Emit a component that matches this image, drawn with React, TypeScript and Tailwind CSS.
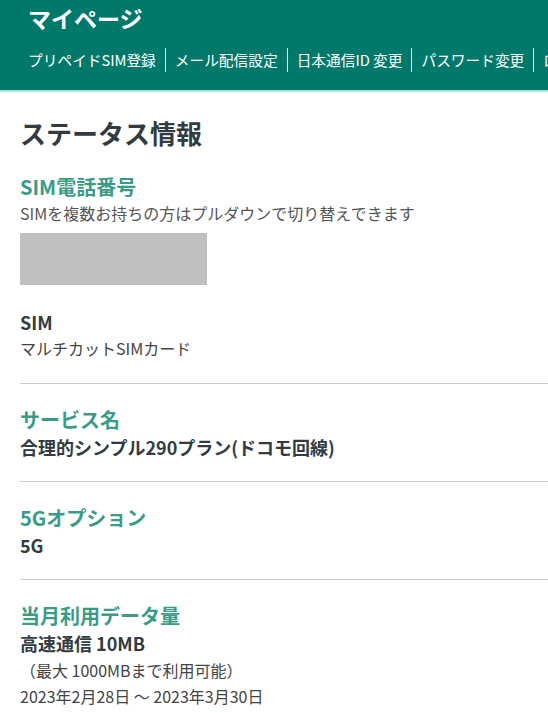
const navItems = ['プリペイドSIM登録', 'メール配信設定', '日本通信ID 変更', 'パスワード変更', 'ログアウト'];

const Section = ({ title, children }: { title: string; children: React.ReactNode }) => (
  <div>
    <h3 className="text-[20px] leading-[26px] font-bold text-[#3a9c85]">{title}</h3>
    {children}
  </div>
);

const Divider = () => <div className="h-px bg-[#cccccc] mt-[22px] mb-[23px]" />;

export default function App() {
  return (
    <div
      className="w-[548px] h-[713px] overflow-hidden bg-white"
      style={{ fontFamily: '"Noto Sans CJK JP", "Noto Sans", sans-serif' }}
    >
      {/* Header */}
      <header className="bg-[#00796b] border-b-2 border-[#b2dfdb] h-[92px] pl-7 pt-1 text-white overflow-hidden">
        <h1 className="text-[23px] leading-[28px] font-bold">マイページ</h1>
        <nav className="mt-4 flex whitespace-nowrap text-[14.7px] leading-[24px]">
          {navItems.map((item, i) => (
            <span
              key={item}
              className={i === 0 ? 'pr-[9px]' : 'px-[9px] border-l border-white'}
            >
              {item}
            </span>
          ))}
        </nav>
      </header>

      {/* Content */}
      <main className="pl-5 pt-[23px] text-[16px] text-[#333b42]">
        <h2 className="text-[26px] leading-[36px] font-bold text-[#333b42]">ステータス情報</h2>

        <div className="mt-[23px]">
          <Section title="SIM電話番号">
            <p className="text-[16px] leading-[26px] text-[#555]">
              SIMを複数お持ちの方はプルダウンで切り替えできます
            </p>
            <div className="mt-[7px] w-[187px] h-[52px] bg-[#c0c0c0]" />
          </Section>

          <div className="mt-6">
            <p className="font-bold text-[18px] leading-[26px]">SIM</p>
            <p className="leading-[26px] text-[#444]">マルチカットSIMカード</p>
          </div>

          <Divider />

          <Section title="サービス名">
            <p className="font-bold text-[18px] leading-[28px]">合理的シンプル290プラン(ドコモ回線)</p>
          </Section>

          <div className="h-px bg-[#cccccc] mt-[20px] mb-[23px]" />

          <Section title="5Gオプション">
            <p className="font-bold text-[18px] leading-[28px]">5G</p>
          </Section>

          <div className="h-px bg-[#cccccc] mt-[20px] mb-[23px]" />

          <Section title="当月利用データ量">
            <p className="font-bold text-[18px] leading-[28px]">高速通信 10MB</p>
            <p className="leading-[26px] text-[#444]">（最大 1000MBまで利用可能）</p>
            <p className="leading-[27px] text-[#444]">2023年2月28日 ～ 2023年3月30日</p>
          </Section>
        </div>
      </main>
    </div>
  );
}
